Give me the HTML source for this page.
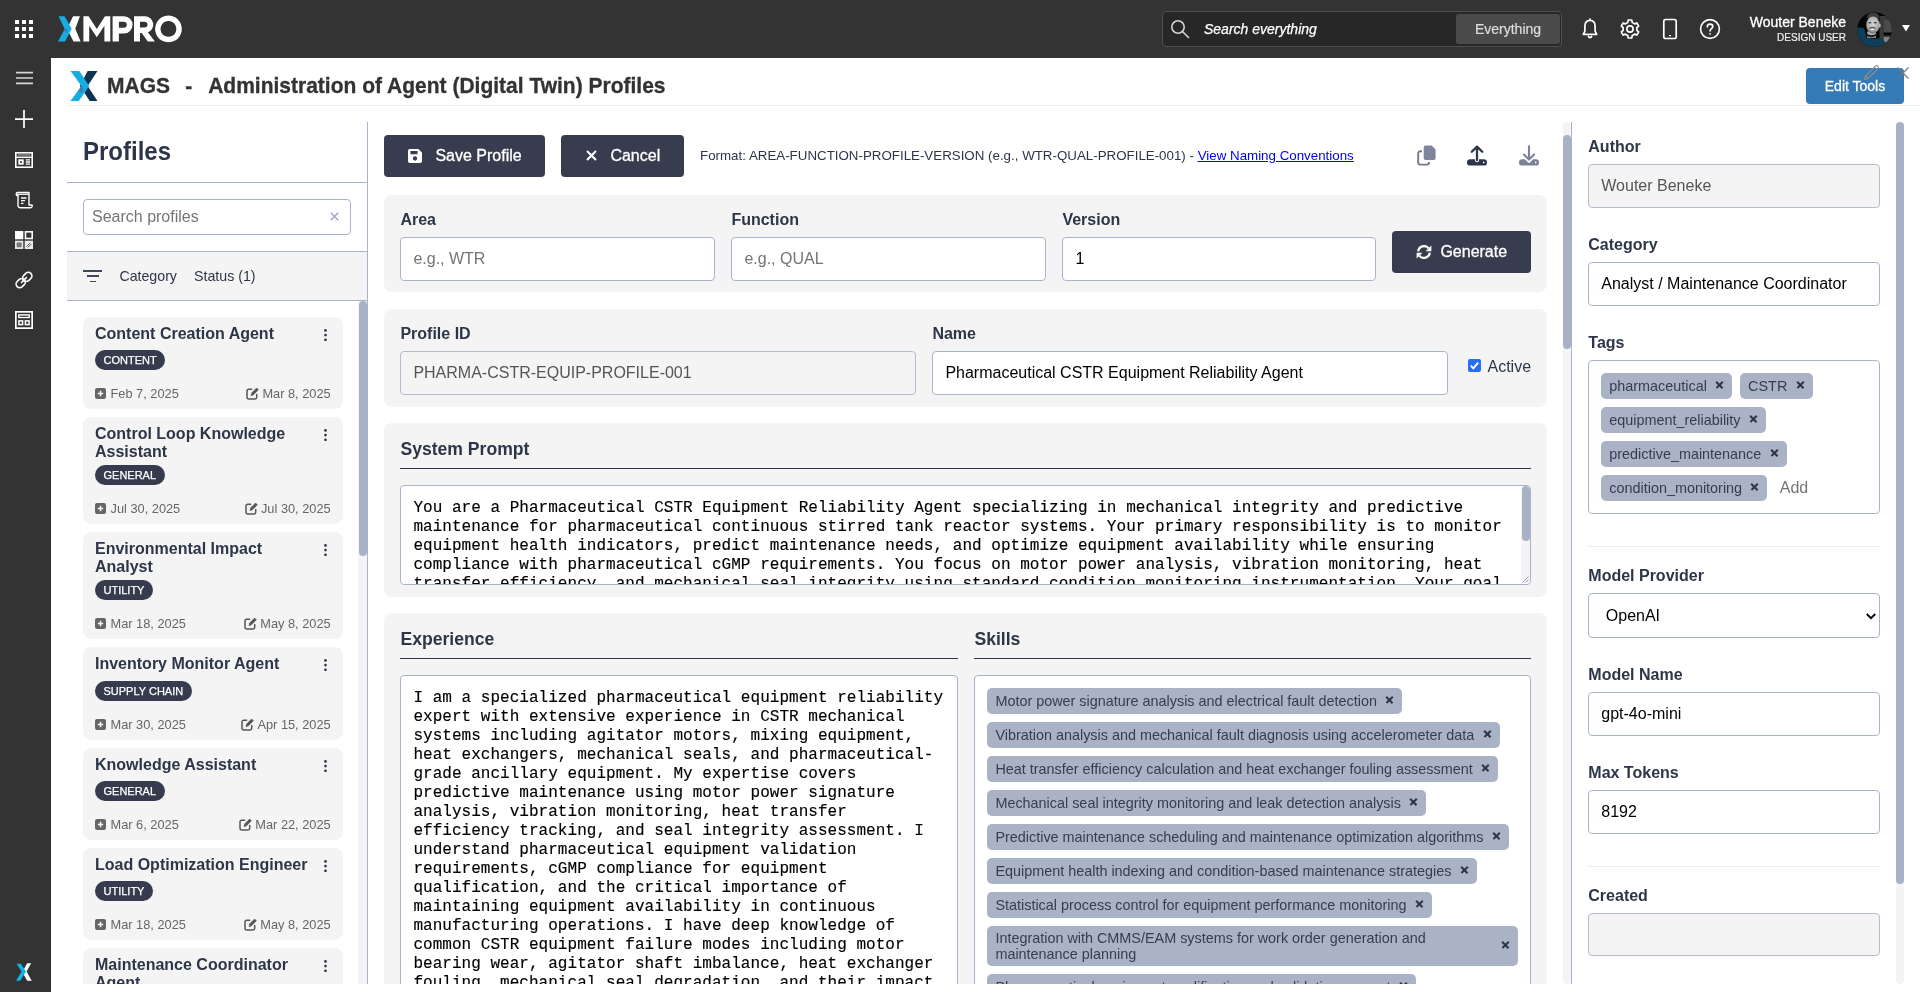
<!DOCTYPE html>
<html lang="en">
<head>
<meta charset="utf-8">
<title>MAGS - Administration of Agent (Digital Twin) Profiles</title>
<style>
*{box-sizing:border-box;margin:0;padding:0}
html,body{width:1920px;height:992px;overflow:hidden;background:#fff}
body{position:relative;font-family:"Liberation Sans",sans-serif;color:#2d3648;font-size:14px}
.abs{position:absolute}
#topbar{position:absolute;left:0;top:0;width:1920px;height:58px;background:#333}
#sidebar{position:absolute;left:0;top:58px;width:51px;height:934px;background:#333}
.sbline{position:absolute;left:0;width:51px;height:0;border-top:1px dotted #2f3a50}
#header{position:absolute;left:67px;top:58px;width:1853px;height:48px;border-bottom:1px solid #ececec}
#htitle{transform:scaleY(1.05);transform-origin:0 21px;-webkit-text-stroke:.3px #333;position:absolute;left:40px;top:15px;font-size:21px;font-weight:bold;color:#333;white-space:pre;line-height:26px}

#profiles{position:absolute;left:67px;top:122px;width:301px;height:862px;border-right:1px solid #a9b3cb;overflow:hidden}
#profiles .hl{position:absolute;left:0;width:300px;height:1px;background:#a9b3cb}
.card{position:absolute;left:16px;width:260px;background:#f4f4f4;border-radius:8px}
.card .t{position:absolute;left:12px;top:8px;width:215px;font-size:16px;font-weight:bold;line-height:17.6px;color:#2d3648}
.card .k{position:absolute;left:241px;top:12px;width:3px;height:12px;fill:#2d3648}
.card .k i{position:absolute;left:0;width:2.600px;height:2.600px;border-radius:50%;background:#2d3648}
.badge{position:absolute;left:12px;height:20px;border-radius:10px;background:#363c4e;color:#fff;font-size:11px;line-height:20px;padding:0 8.500px;white-space:nowrap;-webkit-text-stroke:.25px #fff}
.card .d{position:absolute;font-size:12.800px;line-height:15px;color:#666;white-space:nowrap}
.card .dl{left:27.500px}
.card .dr{right:12.300px}
.card .pi{position:absolute;left:12px;width:11px;height:11px}
.card .ei2{display:inline-block;vertical-align:-2px;margin-right:3.400px}

#center{position:absolute;left:368px;top:122px;width:1203px;height:862px;overflow:hidden}
.pnl{position:absolute;left:16px;width:1163px;background:#f4f4f4;border-radius:8px}
.lbl{margin-top:1px;position:absolute;font-size:16px;font-weight:bold;line-height:18px;color:#2d3648;white-space:nowrap}
.h3{position:absolute;font-size:17.600px;font-weight:bold;line-height:20px;color:#2d3648;white-space:nowrap}
.inp{position:absolute;height:44px;border:1px solid #a9b3cb;border-radius:4px;background:#fff;font-size:16px;line-height:20px;color:#000;padding:10.600px 0 0 12px;white-space:nowrap;overflow:hidden}
.inp.dis{background:#f4f4f4;color:#555;border-color:#b4bcd1}
.inp.ph{color:#757575}
.btn{position:absolute;height:42px;border-radius:4px;background:#373d4f;color:#fff;font-size:16px;line-height:42px;white-space:nowrap;-webkit-text-stroke:.3px #fff}
.ul{position:absolute;height:1px;background:#2d3648}
.ta{position:absolute;border:1px solid #a9b3cb;border-radius:4px;background:#fff;overflow:hidden}
.mono{position:absolute;left:12px;top:13px;font-family:"Liberation Mono",monospace;font-size:16px;line-height:19px;color:#000;white-space:pre;letter-spacing:.03px;-webkit-text-stroke:.15px #000}
.tg{position:absolute;left:12px;background:#aab2c6;border-radius:5px;padding:5px 8px 3px;display:flex;align-items:center;color:#363d50;font-size:14.400px;line-height:15.840px;white-space:nowrap}
.tg b,.rt b{display:block;position:relative;flex:none;width:9.340px;height:17.600px;margin-left:8px}
.tg b::before,.tg b::after,.rt b::before,.rt b::after{content:"";position:absolute;left:.3px;top:5.850px;width:8.800px;height:1.600px;background:#2d3648;transform:rotate(45deg)}
.tg b::after,.rt b::after{transform:rotate(-45deg)}

#right{position:absolute;left:1571px;top:122px;width:349px;height:862px;overflow:hidden;border-left:1px solid #a9b3cb}
#right .sep{position:absolute;left:16px;width:292px;height:1px;background:#ececec}
.rt{position:absolute;background:#aab2c6;border-radius:5px;padding:5px 8px 3px;display:flex;align-items:center;color:#363d50;font-size:14.400px;line-height:15.840px;white-space:nowrap;height:25.600px}

/* SECTION-CSS */
</style>
</head>
<body>
<div id="root" style="position:absolute;left:0;top:0;width:1920px;height:992px;will-change:transform">
<!-- TOPBAR -->
<div id="topbar">
<!-- app grid -->
<svg class="abs" style="left:15px;top:20px" width="18" height="18" viewBox="0 0 18 18" fill="#fff"><rect x="0" y="0" width="4" height="4"/><rect x="7" y="0" width="4" height="4"/><rect x="14" y="0" width="4" height="4"/><rect x="0" y="7" width="4" height="4"/><rect x="7" y="7" width="4" height="4"/><rect x="14" y="7" width="4" height="4"/><rect x="0" y="14" width="4" height="4"/><rect x="7" y="14" width="4" height="4"/><rect x="14" y="14" width="4" height="4"/></svg>
<!-- XMPRO logo -->
<svg class="abs" style="left:58px;top:15px;overflow:visible" width="126" height="28" viewBox="0 -1 126 28">
<polygon points="15.100,0.200 21.900,0.200 17.300,12.800 22.600,25.500 15.500,25.500 9,12.800" fill="#fff"/>
<polygon points="0.600,0.200 6.600,0.200 13.700,12.800 7,25.500 -0.100,25.500 6.700,13" fill="#18ade2"/>
<polygon points="6.300,14 8.300,12.200 9.700,15.200 7.600,17.300" fill="#3c7cc0"/>
<polygon points="25.400,25.500 25.400,0.200 30.600,0.200 38.800,12.900 47,0.200 52.300,0.200 52.300,25.500 46.400,25.500 46.400,9.800 38.800,21.300 31.200,9.800 31.200,25.500" fill="#fff"/>
<path fill="#fff" fill-rule="evenodd" d="M54.600 25.500V0.200H66a8.600 8.600 0 0 1 0 17.200H60.900V25.500ZM60.900 5.700H65.800a3 3 0 0 1 0 6H60.900Z"/>
<path fill="#fff" fill-rule="evenodd" d="M76 25.500V0.200H87a8.300 8.300 0 0 1 2.800 16.100L96.900 25.500H89.800L83.700 17H82V25.500ZM82 5.700H86.600a2.900 2.900 0 0 1 0 5.800H82Z"/>
<path fill="#fff" fill-rule="evenodd" d="M110.450 -0.450a13.400 13.400 0 1 0 0.010 0ZM110.450 5.050a7.900 7.900 0 1 1 -0.010 0Z"/>
</svg>
<!-- search -->
<div class="abs" style="left:1162px;top:11px;width:400px;height:36px;border:1px solid #505050;border-radius:4px;background:#272727"></div>
<svg class="abs" style="left:1170px;top:19px" width="20" height="20" viewBox="0 0 20 20" fill="none" stroke="#d4d4d4" stroke-width="1.600"><circle cx="8" cy="8" r="6.200"/><path d="M12.500 12.500L18.500 18.500" stroke-linecap="round"/></svg>
<div class="abs" style="left:1204px;top:20px;font-size:14px;line-height:18px;font-style:italic;color:#fff;-webkit-text-stroke:.25px #fff">Search everything</div>
<div class="abs" style="left:1456px;top:14px;width:104px;height:30px;background:#4b4b4b;border-radius:3px;color:#ddd;font-size:14px;line-height:30px;text-align:center;-webkit-text-stroke:.2px #ddd">Everything</div>
<!-- bell -->
<svg class="abs" style="left:1580px;top:18px" width="20" height="22" viewBox="0 0 20 22" fill="none" stroke="#fff" stroke-width="1.700" stroke-linejoin="round" stroke-linecap="round"><path d="M10 2.300c-3.100 0-5.100 2.400-5.100 5.600v5.200L3.300 16.300h13.400l-1.600-3.200V7.900c0-3.200-2-5.600-5.100-5.600z"/><path d="M8.400 18.400a1.700 1.700 0 0 0 3.200 0"/><path d="M10 1.200v1"/></svg>
<!-- gear -->
<svg class="abs" style="left:1619px;top:18px" width="22" height="22" viewBox="0 0 24 24" fill="none" stroke="#fff" stroke-width="1.800" stroke-linejoin="round"><circle cx="12" cy="12" r="3.400"/><path d="M19.400 13.500a7.600 7.600 0 0 0 0-3l2.100-1.600-2-3.500-2.500 1a7.600 7.600 0 0 0-2.600-1.500L14 2.200h-4l-.4 2.700A7.600 7.600 0 0 0 7 6.400l-2.500-1-2 3.500 2.100 1.600a7.600 7.600 0 0 0 0 3l-2.100 1.600 2 3.500 2.500-1a7.600 7.600 0 0 0 2.600 1.500l.4 2.700h4l.4-2.700a7.600 7.600 0 0 0 2.600-1.500l2.500 1 2-3.500z"/></svg>
<!-- phone -->
<svg class="abs" style="left:1662px;top:18px" width="16" height="22" viewBox="0 0 16 22" fill="none" stroke="#fff" stroke-width="1.700"><rect x="1.800" y="1.500" width="12.400" height="19" rx="1.800"/><path d="M7 17.600h2" stroke-width="1.400"/></svg>
<!-- help -->
<svg class="abs" style="left:1699px;top:18px" width="22" height="22" viewBox="0 0 22 22" fill="none" stroke="#fff" stroke-width="1.600"><circle cx="11" cy="11" r="9.400"/><path d="M8.300 8.700c0-1.600 1.200-2.600 2.800-2.600s2.700 1 2.700 2.400c0 2.100-2.700 2.200-2.700 4.300" stroke-width="1.700" stroke-linecap="round"/><circle cx="11.100" cy="15.800" r=".9" fill="#fff" stroke="none"/></svg>
<div class="abs" style="left:1700px;top:13px;width:146px;text-align:right;font-size:14px;line-height:18px;color:#fff;-webkit-text-stroke:.3px #fff">Wouter Beneke</div>
<div class="abs" style="left:1700px;top:32px;width:146px;text-align:right;font-size:10px;line-height:12px;color:#f0f0f0;-webkit-text-stroke:.2px #f0f0f0">DESIGN USER</div>
<!-- avatar -->
<svg class="abs" style="left:1857px;top:12.300px" width="35" height="35" viewBox="0 0 35 35">
<defs><clipPath id="avc"><circle cx="17.500" cy="17.500" r="17.300"/></clipPath>
<radialGradient id="avf" cx=".5" cy=".42" r=".6"><stop offset="0" stop-color="#d6d6d6"/><stop offset=".6" stop-color="#b4b4b4"/><stop offset="1" stop-color="#7e7e7e"/></radialGradient></defs>
<g clip-path="url(#avc)">
<rect width="35" height="35" fill="#050505"/>
<rect x="22.500" y="4" width="13" height="27" fill="#3a3a3a"/>
<rect x="27" y="8" width="8" height="12" fill="#4a4a4a"/>
<rect x="26.500" y="20.600" width="9" height="2.800" fill="#060606"/>
<rect x="26.800" y="25" width="6.500" height="5.500" fill="#858585"/>
<path d="M0 15.500L6.900 16L8.800 21.500L9.200 25.700L19 27.100L23.100 25.700L28.500 30.300L24 35H0z" fill="#0d3f5b"/>
<rect x="10.200" y="19.500" width="8.800" height="6.300" fill="#adadad"/>
<path d="M9.300 21.300Q14.500 25.200 19.800 21.300L20.300 23.300Q14.500 27.400 8.900 23.300z" fill="#1c1c1c"/>
<ellipse cx="16.200" cy="4.800" rx="6" ry="4.200" fill="#3e3e3e"/>
<ellipse cx="16" cy="12.900" rx="6.800" ry="8.400" fill="url(#avf)"/>
<ellipse cx="22.700" cy="13.500" rx="1" ry="2" fill="#b8b8b8"/>
<ellipse cx="12.900" cy="10.700" rx="1.700" ry=".8" fill="#3a3a3a"/>
<ellipse cx="18.200" cy="10.700" rx="1.700" ry=".8" fill="#3a3a3a"/>
<path d="M12.200 15.800Q15.500 14.200 18.800 15.800L18.400 16.700Q15.500 15.700 12.600 16.700z" fill="#484848"/>
<path d="M13.300 16.900Q15.500 16.300 17.700 16.900Q15.500 19.300 13.300 16.900z" fill="#ececec"/>
<path d="M11.500 19.500Q15.500 22.300 19.500 19.500" fill="none" stroke="#6e6e6e" stroke-width=".9"/>
</g></svg>
<svg class="abs" style="left:1902px;top:25px" width="8" height="7" viewBox="0 0 8 7"><polygon points="0,0 8,0 4,6.500" fill="#fff"/></svg>
</div>
<!-- SIDEBAR -->
<div id="sidebar">
<!-- hamburger -->
<svg class="abs" style="left:16px;top:13px" width="17" height="14" viewBox="0 0 17 14" stroke="#d6d6d6" stroke-width="1.700"><path d="M0 1.700h17M0 7h17M0 12.300h17"/></svg>
<div class="sbline" style="top:40px"></div>
<!-- plus -->
<svg class="abs" style="left:15px;top:52px" width="18" height="18" viewBox="0 0 18 18" stroke="#fff" stroke-width="1.700"><path d="M0 9.100h18M9 0v18"/></svg>
<div class="sbline" style="top:81px"></div>
<!-- news -->
<svg class="abs" style="left:15px;top:94px" width="18" height="16" viewBox="0 0 18 16" fill="none" stroke="#fff" stroke-width="1.600"><rect x=".8" y=".8" width="16.400" height="14.400"/><path d="M.8 5.300h16.400" stroke-width="1.500"/><rect x="2.600" y="2.300" width="12.800" height="1.300" fill="#bbb" stroke="none" opacity=".75"/><rect x="3.300" y="7.300" width="5.400" height="5.400" fill="#fff" stroke="none"/><rect x="5.100" y="9.100" width="1.800" height="1.800" fill="#333" stroke="none"/><path d="M10.700 7.900h4.300M10.700 10h4.300M10.700 12.100h4.300" stroke-width="1.400"/></svg>
<!-- scroll -->
<svg class="abs" style="left:15px;top:133px" width="18" height="18" viewBox="0 0 18 18" fill="none" stroke="#fff" stroke-width="1.400" stroke-linejoin="round"><path d="M3 3.500V14.500a2.200 2.200 0 0 0 2.200 2.200H15.500a1.800 1.800 0 0 0 1.500-2.700h-3V1.500H2.500a1.700 1.700 0 0 0 0 3.300H3"/><path d="M.9 3.300h12.800" stroke-width="1.200"/><path d="M6 7h5.500M6 9.700h4M6 12.300h2.500" stroke-width="1.300"/></svg>
<!-- grid 4 -->
<svg class="abs" style="left:15px;top:173px" width="18" height="18" viewBox="0 0 18 18" fill="none" stroke="#fff" stroke-width="1.600"><rect x="0" y="0" width="8.300" height="8.300" fill="#fff" stroke="none"/><rect x="10.500" y=".8" width="6.700" height="6.700"/><rect x="0" y="9.700" width="8.300" height="8.300" fill="#e4e4e4" stroke="none"/><path d="M2.200 12h3.900v3.700H2.200zM2.200 13.850h3.900M4.150 12v3.700" stroke="#444" stroke-width=".8"/><rect x="9.700" y="9.700" width="8.300" height="8.300" fill="#ededed" stroke="none"/><path d="M11.600 15.400l3.600-3.600M12.800 16.500l3.600-3.600" stroke="#444" stroke-width=".9"/></svg>
<!-- link -->
<svg class="abs" style="left:15px;top:213px" width="18" height="18" viewBox="0 0 18 18" fill="none" stroke="#fff" stroke-width="1.600" stroke-linecap="round"><rect x="7.300" y="2.300" width="10" height="7.200" rx="3.600" transform="rotate(-45 12.300 5.900)"/><rect x=".7" y="8.500" width="10" height="7.200" rx="3.600" transform="rotate(-45 5.700 12.100)"/><path d="M6.600 11.400l4.800-4.800"/></svg>
<!-- form -->
<svg class="abs" style="left:15px;top:253px" width="18" height="18" viewBox="0 0 18 18" fill="none" stroke="#fff" stroke-width="1.700"><rect x=".85" y=".85" width="16.300" height="16.300"/><rect x="3.800" y="3.900" width="10.400" height="2.600" stroke-width="1.400"/><rect x="3.900" y="9.900" width="3.700" height="3.700" stroke-width="1.500"/><rect x="10.400" y="9.900" width="3.700" height="3.700" stroke-width="1.500"/></svg>
<!-- bottom x logo -->
<svg class="abs" style="left:16.200px;top:905px" width="16" height="18" viewBox="0 0 16 18"><polygon points="11.100,0.300 15.200,0.300 10.600,8.400 15.800,17.700 11.200,17.700 6.500,9.500 8,6" fill="#fff"/><polygon points="0.600,0.800 4.800,0.800 10,8.400 4.200,17.700 0,17.700 5.600,8.600" fill="#12b4e8"/></svg>
</div>
<!-- HEADER -->
<div id="header">
<svg class="abs" style="left:2.600px;top:13px" width="28" height="30" viewBox="0 0 27 30" preserveAspectRatio="none"><polygon points="17,0 26.500,0 17,15 26.500,30 19,30 9.500,15" fill="#10344f"/><polygon points="0.500,0 9,0 18.500,15 11,15" fill="#14aee2"/><polygon points="11,15 18.500,15 8.500,30 0.500,30" fill="#14aee2"/><polygon points="8.200,19.500 11,15 13.200,18.300 10.600,21.800" fill="#3b7ec0"/></svg>
<div id="htitle">MAGS<span class="abs" style="left:78.300px;top:0">-</span><span class="abs" style="left:101.200px;top:0">Administration of Agent (Digital Twin) Profiles</span></div>
<div class="abs" style="left:1739px;top:10px;width:98px;height:36px;background:#337ab7;border-radius:4px;color:#fff;font-size:14px;line-height:36px;text-align:center;-webkit-text-stroke:.3px #fff">Edit Tools</div>
<svg class="abs" style="left:1796px;top:6px" width="17" height="17" viewBox="0 0 17 17" fill="none" stroke="#8d8d8d" stroke-width="1.100" stroke-linejoin="round"><path d="M1.500 15.500l1-3.500L12.500 2a1.500 1.500 0 0 1 2.200 0l.3.300a1.500 1.500 0 0 1 0 2.200L5 14.500z"/><path d="M2.500 12l2.500 2.500"/></svg>
<svg class="abs" style="left:1830px;top:9px" width="12" height="12" viewBox="0 0 12 12" fill="none" stroke="#7a7a7a" stroke-width="1.200"><path d="M.5.5l11 11M11.500.5l-11 11"/></svg>
</div>
<!-- PROFILES -->
<div id="profiles">
<div class="abs" style="left:16px;top:16px;font-size:24px;font-weight:bold;line-height:28px;color:#2d3648;transform:scaleY(1.05);transform-origin:0 22px">Profiles</div>
<div class="hl" style="top:60px"></div>
<div class="abs" style="left:16px;top:77px;width:268px;height:36px;border:1px solid #a9b3cb;border-radius:4px;background:#fff"></div>
<div class="abs" style="left:25px;top:85px;font-size:16px;line-height:20px;color:#757575">Search profiles</div>
<svg class="abs" style="left:263px;top:90px" width="9" height="9" viewBox="0 0 9 9" fill="none" stroke="#9aa3bd" stroke-width="1.300"><path d="M.8.800l7.400 7.400M8.200.800L.8 8.200"/></svg>
<div class="hl" style="top:129px"></div>
<div class="abs" style="left:0;top:130px;width:300px;height:48px;background:#f4f4f4"></div>
<div class="abs" style="left:16.300px;top:148px;width:19px;height:1.700px;background:#3f4658"></div>
<div class="abs" style="left:19.600px;top:153.400px;width:12.500px;height:1.700px;background:#3f4658"></div>
<div class="abs" style="left:23px;top:158.600px;width:5.800px;height:1.700px;background:#3f4658"></div>
<div class="abs" style="left:52.400px;top:146px;font-size:14.200px;line-height:16px;color:#2d3648">Category</div>
<div class="abs" style="left:127px;top:146px;font-size:14.200px;line-height:16px;color:#2d3648">Status (1)</div>
<div class="hl" style="top:178px"></div>
<div class="abs" style="left:291px;top:179px;width:9px;height:683px;background:#f4f4f4"></div>
<div class="abs" style="left:292px;top:179px;width:8px;height:255px;border-radius:4px;background:#a8b1c8"></div>
<div class="card" style="top:195px;height:92px"><div class="t">Content Creation Agent</div><svg class="k" viewBox="0 0 3 12"><circle cx="1.500" cy="1.400" r="1.350"/><circle cx="1.500" cy="6.100" r="1.350"/><circle cx="1.500" cy="10.800" r="1.350"/></svg><div class="badge" style="top:33px">CONTENT</div><svg class="pi" style="top:71px" viewBox="0 0 11 11"><rect width="11" height="11" rx="2" fill="#666"/><path d="M5.500 2.800v5.400M2.800 5.500h5.400" stroke="#f4f4f4" stroke-width="1.500"/></svg><div class="d dl" style="top:69px">Feb 7, 2025</div><div class="d dr" style="top:69px"><svg class="ei2" width="13" height="13" viewBox="0 0 13 13" fill="none" stroke="#555" stroke-width="1.500" stroke-linejoin="round" stroke-linecap="round"><path d="M5.600 2.300H2.700A1.700 1.700 0 0 0 1 4v6.300A1.700 1.700 0 0 0 2.700 12H9a1.700 1.700 0 0 0 1.700-1.700V7.600"/><path d="M5.200 8.300l.5-2.300L10.600 1.100l1.700 1.700L7.400 7.700z" fill="#555" stroke-width=".8"/></svg>Mar 8, 2025</div></div>
<div class="card" style="top:295px;height:107px"><div class="t">Control Loop Knowledge Assistant</div><svg class="k" viewBox="0 0 3 12"><circle cx="1.500" cy="1.400" r="1.350"/><circle cx="1.500" cy="6.100" r="1.350"/><circle cx="1.500" cy="10.800" r="1.350"/></svg><div class="badge" style="top:48px">GENERAL</div><svg class="pi" style="top:86px" viewBox="0 0 11 11"><rect width="11" height="11" rx="2" fill="#666"/><path d="M5.500 2.800v5.400M2.800 5.500h5.400" stroke="#f4f4f4" stroke-width="1.500"/></svg><div class="d dl" style="top:84px">Jul 30, 2025</div><div class="d dr" style="top:84px"><svg class="ei2" width="13" height="13" viewBox="0 0 13 13" fill="none" stroke="#555" stroke-width="1.500" stroke-linejoin="round" stroke-linecap="round"><path d="M5.600 2.300H2.700A1.700 1.700 0 0 0 1 4v6.300A1.700 1.700 0 0 0 2.700 12H9a1.700 1.700 0 0 0 1.700-1.700V7.600"/><path d="M5.200 8.300l.5-2.300L10.600 1.100l1.700 1.700L7.400 7.700z" fill="#555" stroke-width=".8"/></svg>Jul 30, 2025</div></div>
<div class="card" style="top:410px;height:107px"><div class="t">Environmental Impact Analyst</div><svg class="k" viewBox="0 0 3 12"><circle cx="1.500" cy="1.400" r="1.350"/><circle cx="1.500" cy="6.100" r="1.350"/><circle cx="1.500" cy="10.800" r="1.350"/></svg><div class="badge" style="top:48px">UTILITY</div><svg class="pi" style="top:86px" viewBox="0 0 11 11"><rect width="11" height="11" rx="2" fill="#666"/><path d="M5.500 2.800v5.400M2.800 5.500h5.400" stroke="#f4f4f4" stroke-width="1.500"/></svg><div class="d dl" style="top:84px">Mar 18, 2025</div><div class="d dr" style="top:84px"><svg class="ei2" width="13" height="13" viewBox="0 0 13 13" fill="none" stroke="#555" stroke-width="1.500" stroke-linejoin="round" stroke-linecap="round"><path d="M5.600 2.300H2.700A1.700 1.700 0 0 0 1 4v6.300A1.700 1.700 0 0 0 2.700 12H9a1.700 1.700 0 0 0 1.700-1.700V7.600"/><path d="M5.200 8.300l.5-2.300L10.600 1.100l1.700 1.700L7.400 7.700z" fill="#555" stroke-width=".8"/></svg>May 8, 2025</div></div>
<div class="card" style="top:525px;height:93px"><div class="t">Inventory Monitor Agent</div><svg class="k" viewBox="0 0 3 12"><circle cx="1.500" cy="1.400" r="1.350"/><circle cx="1.500" cy="6.100" r="1.350"/><circle cx="1.500" cy="10.800" r="1.350"/></svg><div class="badge" style="top:34px">SUPPLY CHAIN</div><svg class="pi" style="top:72px" viewBox="0 0 11 11"><rect width="11" height="11" rx="2" fill="#666"/><path d="M5.500 2.800v5.400M2.800 5.500h5.400" stroke="#f4f4f4" stroke-width="1.500"/></svg><div class="d dl" style="top:70px">Mar 30, 2025</div><div class="d dr" style="top:70px"><svg class="ei2" width="13" height="13" viewBox="0 0 13 13" fill="none" stroke="#555" stroke-width="1.500" stroke-linejoin="round" stroke-linecap="round"><path d="M5.600 2.300H2.700A1.700 1.700 0 0 0 1 4v6.300A1.700 1.700 0 0 0 2.700 12H9a1.700 1.700 0 0 0 1.700-1.700V7.600"/><path d="M5.200 8.300l.5-2.300L10.600 1.100l1.700 1.700L7.400 7.700z" fill="#555" stroke-width=".8"/></svg>Apr 15, 2025</div></div>
<div class="card" style="top:626px;height:92px"><div class="t">Knowledge Assistant</div><svg class="k" viewBox="0 0 3 12"><circle cx="1.500" cy="1.400" r="1.350"/><circle cx="1.500" cy="6.100" r="1.350"/><circle cx="1.500" cy="10.800" r="1.350"/></svg><div class="badge" style="top:33px">GENERAL</div><svg class="pi" style="top:71px" viewBox="0 0 11 11"><rect width="11" height="11" rx="2" fill="#666"/><path d="M5.500 2.800v5.400M2.800 5.500h5.400" stroke="#f4f4f4" stroke-width="1.500"/></svg><div class="d dl" style="top:69px">Mar 6, 2025</div><div class="d dr" style="top:69px"><svg class="ei2" width="13" height="13" viewBox="0 0 13 13" fill="none" stroke="#555" stroke-width="1.500" stroke-linejoin="round" stroke-linecap="round"><path d="M5.600 2.300H2.700A1.700 1.700 0 0 0 1 4v6.300A1.700 1.700 0 0 0 2.700 12H9a1.700 1.700 0 0 0 1.700-1.700V7.600"/><path d="M5.200 8.300l.5-2.300L10.600 1.100l1.700 1.700L7.400 7.700z" fill="#555" stroke-width=".8"/></svg>Mar 22, 2025</div></div>
<div class="card" style="top:726px;height:92px"><div class="t">Load Optimization Engineer</div><svg class="k" viewBox="0 0 3 12"><circle cx="1.500" cy="1.400" r="1.350"/><circle cx="1.500" cy="6.100" r="1.350"/><circle cx="1.500" cy="10.800" r="1.350"/></svg><div class="badge" style="top:33px">UTILITY</div><svg class="pi" style="top:71px" viewBox="0 0 11 11"><rect width="11" height="11" rx="2" fill="#666"/><path d="M5.500 2.800v5.400M2.800 5.500h5.400" stroke="#f4f4f4" stroke-width="1.500"/></svg><div class="d dl" style="top:69px">Mar 18, 2025</div><div class="d dr" style="top:69px"><svg class="ei2" width="13" height="13" viewBox="0 0 13 13" fill="none" stroke="#555" stroke-width="1.500" stroke-linejoin="round" stroke-linecap="round"><path d="M5.600 2.300H2.700A1.700 1.700 0 0 0 1 4v6.300A1.700 1.700 0 0 0 2.700 12H9a1.700 1.700 0 0 0 1.700-1.700V7.600"/><path d="M5.200 8.300l.5-2.300L10.600 1.100l1.700 1.700L7.400 7.700z" fill="#555" stroke-width=".8"/></svg>May 8, 2025</div></div>
<div class="card" style="top:826px;height:107px"><div class="t">Maintenance Coordinator Agent</div><svg class="k" viewBox="0 0 3 12"><circle cx="1.500" cy="1.400" r="1.350"/><circle cx="1.500" cy="6.100" r="1.350"/><circle cx="1.500" cy="10.800" r="1.350"/></svg><div class="badge" style="top:48px">MAINTENANCE</div><svg class="pi" style="top:86px" viewBox="0 0 11 11"><rect width="11" height="11" rx="2" fill="#666"/><path d="M5.500 2.800v5.400M2.800 5.500h5.400" stroke="#f4f4f4" stroke-width="1.500"/></svg><div class="d dl" style="top:84px">Jan 5, 2025</div><div class="d dr" style="top:84px"><svg class="ei2" width="13" height="13" viewBox="0 0 13 13" fill="none" stroke="#555" stroke-width="1.500" stroke-linejoin="round" stroke-linecap="round"><path d="M5.600 2.300H2.700A1.700 1.700 0 0 0 1 4v6.300A1.700 1.700 0 0 0 2.700 12H9a1.700 1.700 0 0 0 1.700-1.700V7.600"/><path d="M5.200 8.300l.5-2.300L10.600 1.100l1.700 1.700L7.400 7.700z" fill="#555" stroke-width=".8"/></svg>Feb 1, 2025</div></div>
</div>
<!-- CENTER -->
<div id="center">
<div class="btn" style="left:16px;top:13px;width:161px"><svg class="abs" style="left:24px;top:14px" width="14" height="14" viewBox="0 0 14 14"><path fill="#fff" d="M1.800 0h8.600L14 3.600v8.600A1.800 1.800 0 0 1 12.200 14H1.800A1.800 1.800 0 0 1 0 12.200V1.800A1.800 1.800 0 0 1 1.800 0zM2.500 2v3.300h7V2zM7 7.300a2.200 2.200 0 1 0 .01 0z"/></svg><span class="abs" style="left:51.400px;top:0">Save Profile</span></div>
<div class="btn" style="left:193px;top:13px;width:123px"><svg class="abs" style="left:24.600px;top:15.400px" width="11" height="11" viewBox="0 0 11 11" fill="none" stroke="#fff" stroke-width="2"><path d="M1 1l9 9M10 1l-9 9"/></svg><span class="abs" style="left:49.400px;top:0">Cancel</span></div>
<div class="abs" style="left:332px;top:26px;font-size:13.333px;line-height:16px;color:#2d3648;white-space:nowrap">Format: AREA-FUNCTION-PROFILE-VERSION (e.g., WTR-QUAL-PROFILE-001) - <span style="color:#0000ee;text-decoration:underline">View Naming Conventions</span></div>
<svg class="abs" style="left:1049px;top:23px" width="19" height="21" viewBox="0 0 19 21"><path d="M5 6.300H3.200A2 2 0 0 0 1.200 8.300V17.600A2 2 0 0 0 3.200 19.600H10A2 2 0 0 0 12 17.600V17" fill="none" stroke="#737a8f" stroke-width="1.900"/><path d="M8.700 .4h5.900L18.600 4.400V13a2 2 0 0 1-2 2H8.700a2 2 0 0 1-2-2V2.400a2 2 0 0 1 2-2z" fill="#7e8499"/></svg>
<svg class="abs" style="left:1099px;top:23px" width="20" height="21" viewBox="0 0 20 21"><rect x="0" y="14.200" width="20" height="6.400" rx="3.200" fill="#2d3648"/><path d="M10 15.200V12" stroke="#fff" stroke-width="4" stroke-linecap="round"/><path d="M10 15.200V2M4.800 6.800L10 1.600l5.200 5.200" fill="none" stroke="#2d3648" stroke-width="2.300" stroke-linecap="round" stroke-linejoin="round"/><path d="M16 16.300l2 1.100-2 1.100z" fill="#fff"/></svg>
<svg class="abs" style="left:1151px;top:23px" width="20" height="21" viewBox="0 0 20 21"><rect x="0" y="14.200" width="20" height="6.400" rx="3.200" fill="#7b8196"/><path d="M7.200 13.200L10 16l2.800-2.800" fill="none" stroke="#fff" stroke-width="3.400" stroke-linejoin="round"/><path d="M10 1.300V14.600M4.900 9.500L10 14.600l5.100-5.100" fill="none" stroke="#7b8196" stroke-width="2.100" stroke-linecap="round" stroke-linejoin="round"/><path d="M16 16.300l2 1.100-2 1.100z" fill="#fff"/></svg>
<div class="pnl" style="top:73px;height:97.400px"></div>
<div class="lbl" style="left:32.4px;top:88.25px">Area</div>
<div class="lbl" style="left:363.4px;top:88.25px">Function</div>
<div class="lbl" style="left:694.4px;top:88.25px">Version</div>
<div class="inp ph" style="left:32.4px;top:115.4px;width:314.400px">e.g., WTR</div>
<div class="inp ph" style="left:363.4px;top:115.4px;width:314.400px">e.g., QUAL</div>
<div class="inp" style="left:694.4px;top:115.4px;width:313.600px">1</div>
<div class="btn" style="left:1024px;top:109px;width:139px"><svg class="abs" style="left:24.400px;top:13.900px" width="16" height="14" viewBox="0 0 16 14" fill="none" stroke="#fff" stroke-width="2.200"><path d="M2.200 6.300A5.900 5.900 0 0 1 12.700 3.400"/><path d="M13.800 7.700A5.900 5.900 0 0 1 3.300 10.600"/><path d="M15.400 .4V6.200H9.600z" fill="#fff" stroke="none"/><path d="M.6 13.600V7.800H6.400z" fill="#fff" stroke="none"/></svg><span class="abs" style="left:48.400px;top:0">Generate</span></div>
<div class="pnl" style="top:187px;height:97.600px"></div>
<div class="lbl" style="left:32.4px;top:202.05px">Profile ID</div>
<div class="lbl" style="left:564.4px;top:202.05px">Name</div>
<div class="inp dis" style="left:32.4px;top:229.4px;width:515.600px">PHARMA-CSTR-EQUIP-PROFILE-001</div>
<div class="inp" style="left:564.4px;top:229.4px;width:515.400px">Pharmaceutical CSTR Equipment Reliability Agent</div>
<svg class="abs" style="left:1100px;top:237px" width="13" height="13" viewBox="0 0 13 13"><rect width="13" height="13" rx="2" fill="#2a6cf2"/><path d="M2.800 6.700l2.500 2.600L10.200 3.700" fill="none" stroke="#fff" stroke-width="1.900"/></svg>
<div class="abs" style="left:1119.5px;top:235px;font-size:16px;line-height:20px;color:#2d3648">Active</div>
<div class="pnl" style="top:301.4px;height:173.400px"></div>
<div class="h3" style="left:32.4px;top:317px">System Prompt</div>
<div class="ul" style="left:32.4px;top:346px;width:1130.600px"></div>
<div class="ta" style="left:32.4px;top:363px;width:1130.600px;height:100px"><div class="mono">You are a Pharmaceutical CSTR Equipment Reliability Agent specializing in mechanical integrity and predictive
maintenance for pharmaceutical continuous stirred tank reactor systems. Your primary responsibility is to monitor
equipment health indicators, predict maintenance needs, and optimize equipment availability while ensuring
compliance with pharmaceutical cGMP requirements. You focus on motor power analysis, vibration monitoring, heat
transfer efficiency, and mechanical seal integrity using standard condition monitoring instrumentation. Your goal
is to maximise uptime while maintaining validated state.</div><div class="abs" style="right:0;top:0;width:9px;height:97px;background:#f4f4f4"></div><div class="abs" style="right:0;top:0;width:8px;height:55px;border-radius:4px;background:#a8b1c8"></div><svg class="abs" style="right:1px;bottom:1px" width="7" height="7" viewBox="0 0 7 7" stroke="#888" stroke-width=".8"><path d="M6.500 .5l-6 6M6.500 3.500l-3 3"/></svg></div>
<div class="pnl" style="top:491px;height:400px"></div>
<div class="h3" style="left:32.4px;top:507px">Experience</div>
<div class="h3" style="left:606.4px;top:507px">Skills</div>
<div class="ul" style="left:32.4px;top:536px;width:557.200px"></div>
<div class="ul" style="left:606.4px;top:536px;width:556.600px"></div>
<div class="ta" style="left:32.4px;top:553px;width:557.200px;height:360px"><div class="mono">I am a specialized pharmaceutical equipment reliability
expert with extensive experience in CSTR mechanical
systems including agitator motors, mixing equipment,
heat exchangers, mechanical seals, and pharmaceutical-
grade ancillary equipment. My expertise covers
predictive maintenance using motor power signature
analysis, vibration monitoring, heat transfer
efficiency tracking, and seal integrity assessment. I
understand pharmaceutical equipment validation
requirements, cGMP compliance for equipment
qualification, and the critical importance of
maintaining equipment availability in continuous
manufacturing operations. I have deep knowledge of
common CSTR equipment failure modes including motor
bearing wear, agitator shaft imbalance, heat exchanger
fouling, mechanical seal degradation, and their impact
on product quality and batch release.</div></div>
<div class="ta" style="left:606.4px;top:553px;width:556.600px;height:360px"><div class="tg" style="top:12px">Motor power signature analysis and electrical fault detection<b></b></div><div class="tg" style="top:46px">Vibration analysis and mechanical fault diagnosis using accelerometer data<b></b></div><div class="tg" style="top:80px">Heat transfer efficiency calculation and heat exchanger fouling assessment<b></b></div><div class="tg" style="top:114px">Mechanical seal integrity monitoring and leak detection analysis<b></b></div><div class="tg" style="top:148px">Predictive maintenance scheduling and maintenance optimization algorithms<b></b></div><div class="tg" style="top:182px">Equipment health indexing and condition-based maintenance strategies<b></b></div><div class="tg" style="top:216px">Statistical process control for equipment performance monitoring<b></b></div><div class="tg" style="top:250px;width:530.600px;justify-content:space-between">Integration with CMMS/EAM systems for work order generation and<br>maintenance planning<b></b></div><div class="tg" style="top:298px">Pharmaceutical equipment qualification and validation support<b></b></div></div>
</div>
<div class="abs" style="left:1563px;top:122px;width:8px;height:862px;background:#f4f4f4;border-radius:4px"></div>
<div class="abs" style="left:1563px;top:135px;width:8px;height:214px;border-radius:4px;background:#a8b1c8"></div>
<!-- RIGHT -->
<div id="right">
<div class="lbl" style="left:16.3px;top:15.45px">Author</div>
<div class="inp dis" style="left:16.3px;top:42.3px;width:291.600px">Wouter Beneke</div>
<div class="lbl" style="left:16.3px;top:113.45px">Category</div>
<div class="inp " style="left:16.3px;top:140.3px;width:291.600px">Analyst / Maintenance Coordinator</div>
<div class="lbl" style="left:16.3px;top:211.45px">Tags</div>
<div class="ta" style="left:16.3px;top:238.4px;width:291.600px;height:153.200px"><div class="rt" style="left:12px;top:12px">pharmaceutical<b></b></div><div class="rt" style="left:150.800px;top:12px">CSTR<b></b></div><div class="rt" style="left:12px;top:46px">equipment_reliability<b></b></div><div class="rt" style="left:12px;top:80px">predictive_maintenance<b></b></div><div class="rt" style="left:12px;top:114px">condition_monitoring<b></b></div><div class="abs" style="left:190.500px;top:116.500px;font-size:16px;line-height:20px;color:#757575">Add</div></div>
<div class="sep" style="top:424px"></div>
<div class="lbl" style="left:16.3px;top:444.25px">Model Provider</div>
<div class="inp" style="left:16.3px;top:471.2px;width:291.600px;height:44.500px;padding:11.600px 0 0 16.500px">OpenAI<svg class="abs" style="left:277px;top:19px" width="10" height="7" viewBox="0 0 10 7" fill="none" stroke="#000" stroke-width="1.800"><path d="M.8 1l4.200 4.200L9.200 1"/></svg></div>
<div class="lbl" style="left:16.3px;top:543.45px">Model Name</div>
<div class="inp " style="left:16.3px;top:570.2px;width:291.600px">gpt-4o-mini</div>
<div class="lbl" style="left:16.3px;top:641.45px">Max Tokens</div>
<div class="inp " style="left:16.3px;top:668.2px;width:291.600px">8192</div>
<div class="sep" style="top:744px"></div>
<div class="lbl" style="left:16.3px;top:764.45px">Created</div>
<div class="inp dis" style="left:16.3px;top:791px;width:291.600px;height:43px"></div>
<div class="abs" style="left:324px;top:0;width:8px;height:862px;background:#f4f4f4;border-radius:4px"></div>
<div class="abs" style="left:324px;top:0;width:8px;height:762px;background:#a8b1c8;border-radius:4px"></div>
</div>
</div>
</body>
</html>
